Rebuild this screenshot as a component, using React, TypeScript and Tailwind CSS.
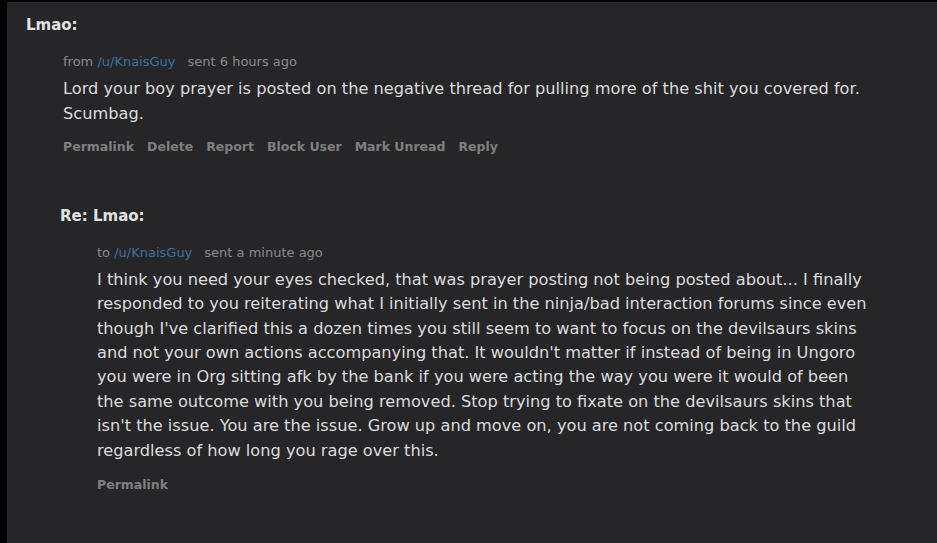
import React from "react";

const font = { fontFamily: '"DejaVu Sans", Verdana, sans-serif' };

function Actions({ items, className }: { items: string[]; className: string }) {
  return (
    <div className={`flex gap-[13px] text-[12.5px] font-bold text-[#7f7f7f] ${className}`}>
      {items.map((a) => (
        <span key={a}>{a}</span>
      ))}
    </div>
  );
}

export default function App() {
  return (
    <div className="bg-black h-[543px] pl-[7px] pt-[2px] overflow-hidden" style={font}>
      <div className="bg-[#262628] h-full pl-[19px] pr-[57px] pt-[14px]">
        <h2 className="text-[15px] font-bold text-[#e3e3e3] leading-[18px]">Lmao:</h2>
        <div className="pl-[37px] mt-[19px]">
          <div className="text-[13px] text-[#8a8a8a] leading-[18px]">
            from <span className="text-[#3f7196]">/u/KnaisGuy</span>
            <span className="ml-[12px]">sent 6 hours ago</span>
          </div>
          <p className="text-[16.2px] text-[#dcdcdc] leading-[24.5px] mt-[6px]">
            Lord your boy prayer is posted on the negative thread for pulling more of the shit you covered for. Scumbag.
          </p>
          <Actions className="mt-[12px]" items={["Permalink", "Delete", "Report", "Block User", "Mark Unread", "Reply"]} />
        </div>

        <div className="pl-[34px] mt-[50px]">
          <h2 className="text-[15px] font-bold text-[#e3e3e3] leading-[18px]">Re: Lmao:</h2>
          <div className="pl-[37px] mt-[19px]">
            <div className="text-[13px] text-[#8a8a8a] leading-[18px]">
              to <span className="text-[#3f7196]">/u/KnaisGuy</span>
              <span className="ml-[12px]">sent a minute ago</span>
            </div>
            <p className="text-[16.2px] text-[#dcdcdc] leading-[24.4px] mt-[6px]">
              I think you need your eyes checked, that was prayer posting not being posted about... I finally responded to you reiterating what I initially sent in the ninja/bad interaction forums since even though I've clarified this a dozen times you still seem to want to focus on the devilsaurs skins and not your own actions accompanying that. It wouldn't matter if instead of being in Ungoro you were in Org sitting afk by the bank if you were acting the way you were it would of been the same outcome with you being removed. Stop trying to fixate on the devilsaurs skins that isn't the issue. You are the issue. Grow up and move on, you are not coming back to the guild regardless of how long you rage over this.
            </p>
            <Actions className="mt-[13px]" items={["Permalink"]} />
          </div>
        </div>
      </div>
    </div>
  );
}
